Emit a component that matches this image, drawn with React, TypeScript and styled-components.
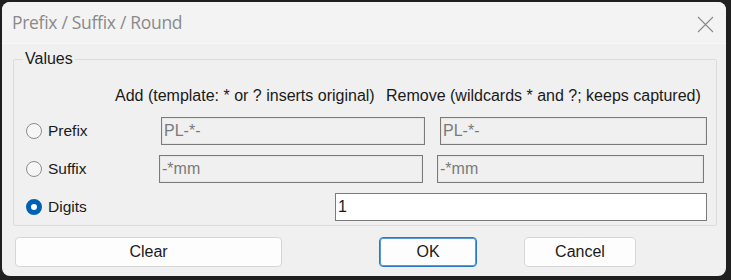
import React from "react";
import styled, { createGlobalStyle } from "styled-components";

const Global = createGlobalStyle`
  html, body {
    margin: 0;
    padding: 0;
    background: #1f1f1f;
  }
  body {
    font-family: "Liberation Sans", Arial, sans-serif;
  }
`;

const Window = styled.div`
  width: 724px;
  height: 274px;
  margin: 2px 5px 4px 2px;
  background: #f0f0f0;
  border-radius: 8px;
  overflow: hidden;
  display: flex;
  flex-direction: column;
`;

const TitleBar = styled.div`
  height: 42px;
  display: flex;
  align-items: center;
  justify-content: space-between;
  padding: 0 12px 0 10px;
  background: #f3f3f3;
  border-bottom: 1px solid #f7f7f7;
  box-sizing: border-box;
`;

const Title = styled.div`
  font-family: "Open Sans", "Noto Sans", sans-serif;
  font-size: 17.5px;
  color: #8a8a8a;
  letter-spacing: -0.3px;
  margin-top: -1px;
`;

const CloseIcon = styled.svg`
  margin-top: 4px;
`;

const Body = styled.div`
  padding: 6px 9px 0 11px;
  display: flex;
  flex-direction: column;
`;

const Group = styled.fieldset`
  margin: 0;
  padding: 0 0 0 12px;
  border: 1px solid #dcdcdc;
  border-radius: 2px;
  height: 176px;
  box-sizing: border-box;
`;

const Legend = styled.legend`
  font-size: 16px;
  color: #1a1a1a;
  padding: 0 2px;
  margin-left: -3px;
`;

const Header = styled.div`
  display: flex;
  padding-left: 89px;
  font-size: 16px;
  color: #1a1a1a;
  height: 18px;
  margin-top: 19px;
  white-space: nowrap;
`;

const HeadCell = styled.span<{ $w: number }>`
  width: ${(p) => p.$w}px;
  flex-shrink: 0;
`;

const Rows = styled.div`
  display: flex;
  flex-direction: column;
  gap: 10px;
  margin-top: 12px;
`;

const Row = styled.div<{ $lead: number }>`
  display: flex;
  align-items: center;
  height: 28px;
  & > label {
    width: ${(p) => p.$lead}px;
  }
`;

const RadioLabel = styled.label`
  display: flex;
  align-items: center;
  gap: 6px;
  font-size: 15.5px;
  color: #1a1a1a;
  flex-shrink: 0;
`;

const Radio = styled.span<{ $on?: boolean }>`
  width: 16px;
  height: 16px;
  box-sizing: border-box;
  border-radius: 50%;
  border: ${(p) => (p.$on ? "5px solid #0060b6" : "1px solid #8d8d8d")};
  background: ${(p) => (p.$on ? "#ffffff" : "#f6f6f6")};
`;

const Field = styled.div<{ $w: number; $on?: boolean }>`
  width: ${(p) => p.$w}px;
  height: 28px;
  box-sizing: border-box;
  border: 1px solid #7a7a7a;
  box-shadow: inset 0 0 0 1px ${(p) => (p.$on ? "#ffffff" : "#e6e6e6")};
  background: ${(p) => (p.$on ? "#ffffff" : "#f0f0f0")};
  color: ${(p) => (p.$on ? "#1a1a1a" : "#7a7a7a")};
  font-size: 16px;
  display: flex;
  align-items: center;
  padding-left: 2px;
  flex-shrink: 0;
`;

const Gap = styled.div<{ $w: number }>`
  width: ${(p) => p.$w}px;
  flex-shrink: 0;
`;

const Buttons = styled.div`
  display: flex;
  margin-top: 11px;
  padding-left: 2px;
`;

const Button = styled.button<{ $w: number; $ml: number; $primary?: boolean }>`
  width: ${(p) => p.$w}px;
  height: 30px;
  margin-left: ${(p) => p.$ml}px;
  box-sizing: border-box;
  background: #fdfdfd;
  border: 1px solid ${(p) => (p.$primary ? "#2a78c4" : "#d5d5d5")};
  box-shadow: ${(p) => (p.$primary ? "inset 0 0 0 1px #5b9bd5" : "none")};
  border-radius: 4px;
  font-family: "Liberation Sans", Arial, sans-serif;
  font-size: 16px;
  color: #1a1a1a;
  padding: 0;
`;

const Close = () => (
  <CloseIcon width="17" height="17" viewBox="0 0 17 17">
    <path d="M1 1 L16 16 M16 1 L1 16" stroke="#8a8a8a" strokeWidth="1.1" />
  </CloseIcon>
);

export default function App() {
  return (
    <>
      <Global />
      <Window>
        <TitleBar>
          <Title>Prefix / Suffix / Round</Title>
          <Close />
        </TitleBar>
        <Body>
          <Group>
            <Legend>Values</Legend>
            <Header>
              <HeadCell $w={271}>Add (template: * or ? inserts original)</HeadCell>
              <HeadCell $w={320}>Remove (wildcards * and ?; keeps captured)</HeadCell>
            </Header>
            <Rows>
              <Row $lead={135}>
                <RadioLabel>
                  <Radio />
                  Prefix
                </RadioLabel>
                <Field $w={264}>PL-*-</Field>
                <Gap $w={15} />
                <Field $w={267}>PL-*-</Field>
              </Row>
              <Row $lead={133}>
                <RadioLabel>
                  <Radio />
                  Suffix
                </RadioLabel>
                <Field $w={264}>-*mm</Field>
                <Gap $w={14} />
                <Field $w={267}>-*mm</Field>
              </Row>
              <Row $lead={309}>
                <RadioLabel>
                  <Radio $on />
                  Digits
                </RadioLabel>
                <Field $w={372} $on>
                  1
                </Field>
              </Row>
            </Rows>
          </Group>
          <Buttons>
            <Button $w={267} $ml={0}>
              Clear
            </Button>
            <Button $w={98} $ml={97} $primary>
              OK
            </Button>
            <Button $w={112} $ml={47}>
              Cancel
            </Button>
          </Buttons>
        </Body>
      </Window>
    </>
  );
}
